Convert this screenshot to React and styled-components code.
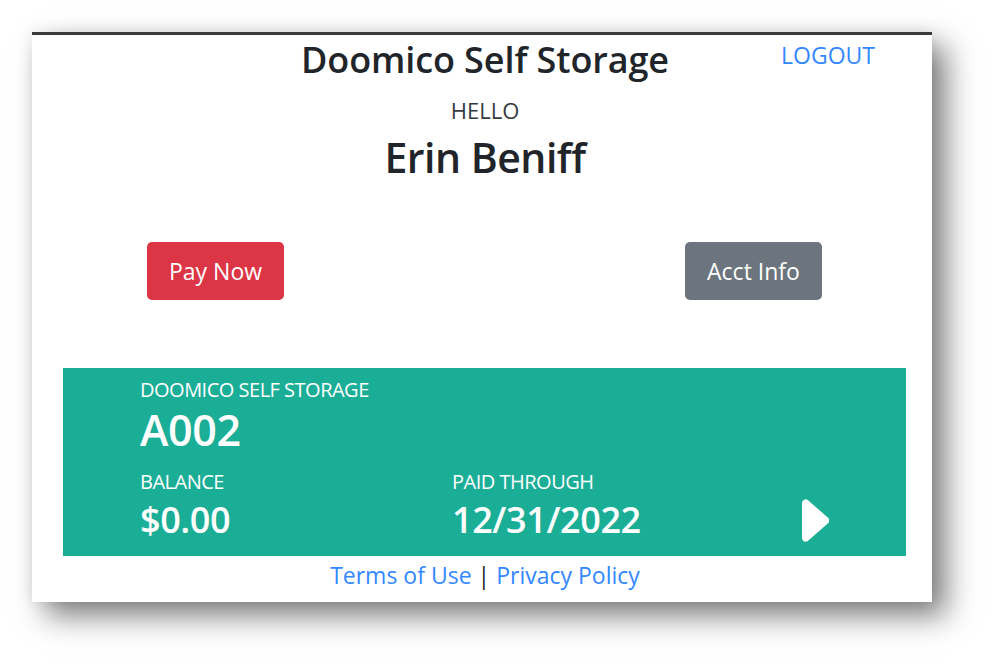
import React from "react";
import styled, { createGlobalStyle } from "styled-components";

const Global = createGlobalStyle`
  html, body { margin: 0; padding: 0; background: #ffffff; }
  body { font-family: "Open Sans", "Noto Sans", Arial, sans-serif; color: #212529; }
`;

const Stage = styled.div`
  width: 997px;
  height: 667px;
  padding: 32px 0 0 32px;
  box-sizing: border-box;
  background: #ffffff;
`;

const Frame = styled.div`
  width: 900px;
  height: 570px;
  box-sizing: border-box;
  border-top: 3px solid #3a3a3a;
  background: #ffffff;
  padding-left: 6px;
  box-shadow: 14px 14px 28px rgba(0, 0, 0, 0.5), 0 0 14px rgba(0, 0, 0, 0.08);
  display: flex;
  flex-direction: column;
`;

const Header = styled.div`
  position: relative;
  display: flex;
  justify-content: center;
  padding-top: 2px;
`;

const Title = styled.h1`
  margin: 0;
  font-size: 36px;
  font-weight: 600;
  line-height: 46px;
  letter-spacing: -0.1px;
`;

const Logout = styled.a`
  position: absolute;
  right: 57px;
  top: 2px;
  font-size: 23px;
  line-height: 36px;
  color: #3388ff;
  text-decoration: none;
`;

const Greeting = styled.div`
  display: flex;
  flex-direction: column;
  align-items: center;
  margin-top: 12px;
`;

const Hello = styled.div`
  font-size: 22px;
  line-height: 30px;
  color: #343a40;
`;

const Name = styled.h2`
  margin: 4px 0 0;
  font-size: 41px;
  font-weight: 600;
  line-height: 56px;
  letter-spacing: -0.5px;
`;

const Actions = styled.div`
  display: flex;
  justify-content: space-between;
  padding: 0 110px 0 109px;
  margin-top: 57px;
`;

const Button = styled.button`
  width: 137px;
  height: 58px;
  border: none;
  border-radius: 5px;
  font-family: inherit;
  font-size: 23px;
  color: #ffffff;
  background: ${(p) => p.$bg};
  cursor: pointer;
`;

const Card = styled.div`
  margin: 68px 26px 0 25px;
  height: 188px;
  box-sizing: border-box;
  background: #1bae97;
  color: #ffffff;
  padding: 8px 0 0 77px;
  display: grid;
  grid-template-columns: 312px 350px 1fr;
  grid-template-rows: auto auto;
`;

const Cell = styled.div`
  display: flex;
  flex-direction: column;
  grid-column: ${(p) => p.$col || "auto"};
`;

const Label = styled.div`
  font-size: 20px;
  line-height: 28px;
  letter-spacing: -0.5px;
`;

const Big = styled.div`
  font-size: ${(p) => p.$size}px;
  font-weight: 600;
  line-height: ${(p) => p.$lh}px;
  letter-spacing: -0.4px;
`;

const ArrowCell = styled.div`
  display: flex;
  align-items: flex-end;
  padding-bottom: 14px;
`;

const Footer = styled.div`
  display: flex;
  justify-content: center;
  align-items: center;
  gap: 6px;
  font-size: 23px;
  line-height: 38px;
`;

const FooterLink = styled.a`
  color: #3388ff;
  text-decoration: none;
`;

const Arrow = () => (
  <svg width="27" height="43" viewBox="5 2.2 7.4 11.6" fill="#ffffff">
    <path d="m12.14 8.753-5.482 4.796c-.646.566-1.658.106-1.658-.753V3.204a1 1 0 0 1 1.659-.753l5.48 4.796a1 1 0 0 1 0 1.506z" />
  </svg>
);

export default function App() {
  return (
    <>
      <Global />
      <Stage>
        <Frame>
          <Header>
            <Title>Doomico Self Storage</Title>
            <Logout href="#">LOGOUT</Logout>
          </Header>
          <Greeting>
            <Hello>HELLO</Hello>
            <Name>Erin Beniff</Name>
          </Greeting>
          <Actions>
            <Button $bg="#dc3545">Pay Now</Button>
            <Button $bg="#6c757d">Acct Info</Button>
          </Actions>
          <Card>
            <Cell $col="1 / span 3">
              <Label>DOOMICO SELF STORAGE</Label>
              <Big $size={43} $lh={52}>A002</Big>
            </Cell>
            <Cell>
              <Label>BALANCE</Label>
              <Big $size={36} $lh={48}>$0.00</Big>
            </Cell>
            <Cell>
              <Label>PAID THROUGH</Label>
              <Big $size={36} $lh={48}>12/31/2022</Big>
            </Cell>
            <ArrowCell>
              <Arrow />
            </ArrowCell>
          </Card>
          <Footer>
            <FooterLink href="#">Terms of Use</FooterLink>
            <span>|</span>
            <FooterLink href="#">Privacy Policy</FooterLink>
          </Footer>
        </Frame>
      </Stage>
    </>
  );
}
